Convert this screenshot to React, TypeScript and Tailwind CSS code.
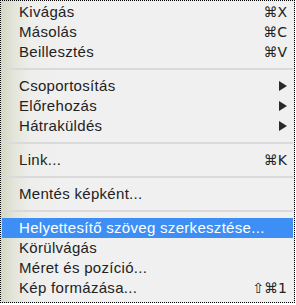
import React from "react";

type Item =
  | { kind: "item"; label: string; shortcut?: string; arrow?: boolean; active?: boolean }
  | { kind: "sep" };

const items: Item[] = [
  { kind: "item", label: "Kivágás", shortcut: "⌘X" },
  { kind: "item", label: "Másolás", shortcut: "⌘C" },
  { kind: "item", label: "Beillesztés", shortcut: "⌘V" },
  { kind: "sep" },
  { kind: "item", label: "Csoportosítás", arrow: true },
  { kind: "item", label: "Előrehozás", arrow: true },
  { kind: "item", label: "Hátraküldés", arrow: true },
  { kind: "sep" },
  { kind: "item", label: "Link...", shortcut: "⌘K" },
  { kind: "sep" },
  { kind: "item", label: "Mentés képként..." },
  { kind: "sep" },
  { kind: "item", label: "Helyettesítő szöveg szerkesztése...", active: true },
  { kind: "item", label: "Körülvágás" },
  { kind: "item", label: "Méret és pozíció..." },
  { kind: "item", label: "Kép formázása...", shortcut: "⇧⌘1" },
];

function Arrow() {
  return (
    <svg width="8" height="10" viewBox="0 0 8 10" className="block">
      <path d="M0 0 L8 5 L0 10 Z" fill="#2a2a2a" />
    </svg>
  );
}

export default function App() {
  return (
    <div
      className="w-[295px] h-[303px] border border-dotted border-black overflow-hidden bg-[linear-gradient(to_right,#d3d8c2_0px,#e4e6dc_14px,#eeeeec_30px,#f0f0f0_60px)]"
      style={{ fontFamily: '"Liberation Sans", Arial, sans-serif' }}
    >
      <div className="pt-[1px] pl-[1px] pr-[1px] flex flex-col">
        {items.map((it, i) =>
          it.kind === "sep" ? (
            <div key={i} className="h-[14px] flex items-center">
              <div className="w-full h-[2px] bg-[#dadada]" />
            </div>
          ) : (
            <div
              key={i}
              className={
                "h-[20px] flex items-center pl-[17px] pr-[6px] text-[15px] tracking-[0.3px] " +
                (it.active ? "bg-[#3d8ff6] text-white" : "text-[#222222]")
              }
            >
              <span className="flex-1 whitespace-nowrap">{it.label}</span>
              {it.shortcut && (
                <span
                  className="whitespace-nowrap text-[14px] tracking-normal"
                  style={{ fontFamily: '"DejaVu Sans", "Liberation Sans", sans-serif' }}
                >
                  {it.shortcut}
                </span>
              )}
              {it.arrow && <Arrow />}
            </div>
          )
        )}
      </div>
    </div>
  );
}
